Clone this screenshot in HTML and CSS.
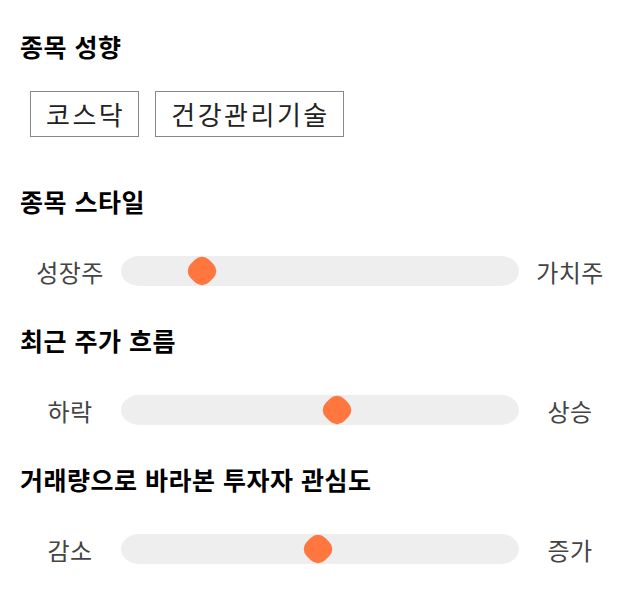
FILE: index.html
```html
<!DOCTYPE html>
<html lang="ko">
<head>
<meta charset="utf-8">
<link rel="stylesheet" href="styles.css">
</head>
<body>
<div class="page">
  <section class="section">
    <h2 class="title">종목 성향</h2>
    <div class="chips">
      <span class="chip">코스닥</span>
      <span class="chip">건강관리기술</span>
    </div>
  </section>
  <section class="section">
    <h2 class="title">종목 스타일</h2>
    <div class="slider-row">
      <span class="label">성장주</span>
      <div class="track"><span class="thumb" style="--v:18%"></span></div>
      <span class="label">가치주</span>
    </div>
  </section>
  <section class="section">
    <h2 class="title">최근 주가 흐름</h2>
    <div class="slider-row">
      <span class="label">하락</span>
      <div class="track"><span class="thumb" style="--v:54.6%"></span></div>
      <span class="label">상승</span>
    </div>
  </section>
  <section class="section">
    <h2 class="title">거래량으로 바라본 투자자 관심도</h2>
    <div class="slider-row">
      <span class="label">감소</span>
      <div class="track"><span class="thumb" style="--v:49.5%"></span></div>
      <span class="label">증가</span>
    </div>
  </section>
</div>
</body>
</html>
```
FILE: styles.css
```css
* { box-sizing: border-box; }
html, body { margin: 0; padding: 0; background: #fff; }
body {
  font-family: "Noto Sans CJK KR", "Noto Sans", sans-serif;
  color: #111;
}
.page {
  padding: 31px 20px 0 20px;
}
.section + .section { margin-top: 29px; }
.title {
  margin: 0;
  height: 30px;
  line-height: 30px;
  font-size: 25px;
  letter-spacing: 0.5px;
  font-weight: 700;
  color: #000;
}
.chips {
  display: flex;
  gap: 16px;
  margin-top: 30px;
  padding-left: 10px;
  padding-bottom: 20px;
}
.chip {
  height: 46px;
  line-height: 44px;
  border: 1px solid #888;
  padding: 0 13px 0 15px;
  font-size: 26px;
  letter-spacing: 2.5px;
  color: #222;
}
.slider-row {
  margin-top: 30px;
  height: 50px;
  display: grid;
  grid-template-columns: 100px 1fr 100px;
  align-items: center;
}
.label {
  text-align: center;
  font-size: 24px;
  letter-spacing: 0.5px;
  color: #444;
}
.track {
  position: relative;
  height: 30px;
  margin: 0 1px;
  background: #eeeeee;
  border-radius: 18px / 15px;
}
.thumb {
  position: absolute;
  top: 2px;
  left: calc(15px + (100% - 30px) * var(--v) / 100%);
  width: 26px;
  height: 26px;
  margin-left: -13px;
  background: #ff773f;
  border-radius: 10px;
  transform: rotate(45deg);
}
```
